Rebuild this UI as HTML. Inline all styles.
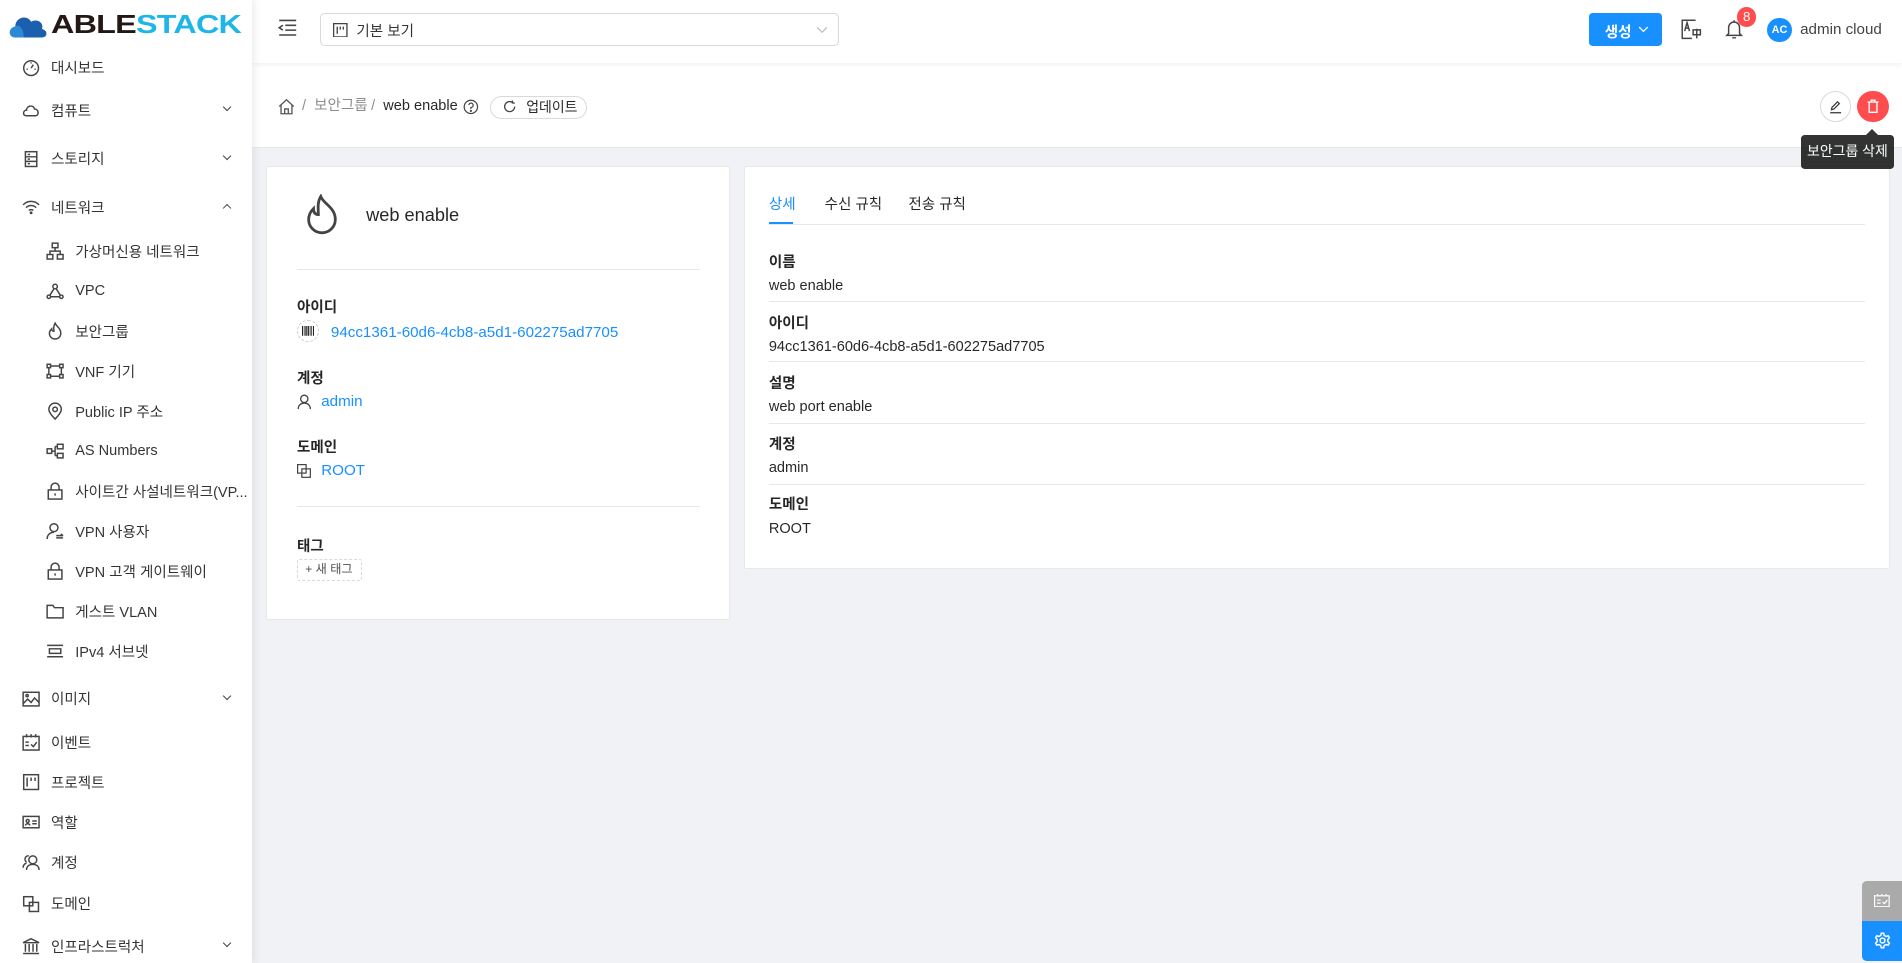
<!DOCTYPE html>
<html><head><meta charset="utf-8">
<style>
*{box-sizing:border-box;margin:0;padding:0}
html,body{width:1902px;height:963px;overflow:hidden;background:#f0f2f5}
#root{zoom:1.21301;width:1568px;height:794px;position:relative;font-family:"Liberation Sans","Noto Sans CJK KR",sans-serif;color:rgba(0,0,0,.85);font-size:12px}
.abs{position:absolute}
#side{left:0;top:0;width:208px;height:794px;background:#fff;box-shadow:2px 0 6px rgba(0,21,41,.08);z-index:2}
.mi{position:absolute;left:0;width:208px;height:20px;display:flex;align-items:center;font-size:12px;color:rgba(0,0,0,.8)}
.mi svg{position:absolute;width:15px;height:15px;fill:none;stroke:#444;stroke-width:1.3}
.mi .t{position:absolute}
.mi .ar{position:absolute;left:185px;width:5px;height:5px;border-right:1.5px solid #444;border-bottom:1.5px solid #444;transform:rotate(45deg);top:5px}
.mi .up{transform:rotate(-135deg);top:8px}
#head{left:208px;top:0;right:0;height:52px;background:#fff;box-shadow:0 1px 4px rgba(0,21,41,.08);z-index:1}
#bc{left:208px;top:52px;right:0;height:70px;background:#fff;border-bottom:1px solid #e8e8e8}
#bc span{line-height:14px}
.card{background:#fff;border:1px solid #e8e8e8;border-radius:2px}
.lab{font-weight:bold;font-size:12px;color:rgba(0,0,0,.85)}
.lnk{color:#1890ff}
.fld{position:absolute;left:20px;right:20px;font-size:12px}
.fld .l{font-weight:bold}
.fld .v{margin-top:5px}
.hr{position:absolute;height:1px;background:#e8e8e8}
</style></head><body><div id="root">

<div id="side" class="abs">
 <div class="abs" style="left:7px;top:9px;display:flex;align-items:center">
  <svg width="34" height="22" viewBox="0 0 34 22"><path d="M6 21 C0 21 0 13 6 12 C6 4 16 2 19 8 C24 5 30 9 28 14 C33 15 33 21 28 21Z" fill="#1b5fae"/><path d="M6 21 C0 21 0 13 6 12 C8 10 13 12 13 21Z" fill="#2b8ad6"/></svg>
  <div style="transform:scaleX(1.27);transform-origin:left center;margin-left:1px;white-space:nowrap"><span style="font-size:21px;font-weight:bold;letter-spacing:-0.5px;color:#231815">ABLE</span><span style="font-size:21px;font-weight:bold;letter-spacing:-0.5px;color:#1eb6e6">STACK</span></div>
 </div>
 <div class="mi" style="top:46px"><svg style="left:18px" viewBox="0 0 16 16"><circle cx="8" cy="8" r="6.5"/><path d="M8 8 L10 5 M4 9h1 M11 9h1 M8 3v1"/></svg><span class="t" style="left:42px">대시보드</span></div>
 <div class="mi" style="top:81px"><svg style="left:18px" viewBox="0 0 16 16"><path d="M4 13 C0 13 1 8 4 8 C4 4 10 3 11 7 C15 7 15 13 12 13Z"/></svg><span class="t" style="left:42px">컴퓨트</span><i class="ar"></i></div>
 <div class="mi" style="top:121px"><svg style="left:18px" viewBox="0 0 16 16"><rect x="3" y="1.5" width="10" height="13"/><path d="M3 6h10M3 10h10M5 4h2M5 8h2M5 12h2"/></svg><span class="t" style="left:42px">스토리지</span><i class="ar"></i></div>
 <div class="mi" style="top:161px"><svg style="left:18px" viewBox="0 0 16 16"><path d="M1 6 C5 2 11 2 15 6 M3.5 8.5 C6 6 10 6 12.5 8.5 M6 11 C7 10 9 10 10 11"/><circle cx="8" cy="13" r=".6" fill="#444"/></svg><span class="t" style="left:42px">네트워크</span><i class="ar up"></i></div>
 <div class="mi" style="top:197px"><svg style="left:38px" viewBox="0 0 16 16"><rect x="5.5" y="1" width="5" height="4"/><rect x="1" y="11" width="5" height="4"/><rect x="10" y="11" width="5" height="4"/><path d="M8 5v3M3.5 11V8h9v3"/></svg><span class="t" style="left:62px">가상머신용 네트워크</span></div>
 <div class="mi" style="top:230px"><svg style="left:38px" viewBox="0 0 16 16"><circle cx="8" cy="4" r="2"/><circle cx="2.5" cy="13" r="1.5"/><circle cx="13.5" cy="13" r="1.5"/><path d="M7 6 L3.5 11.5M9 6 L12.5 11.5M4 13h8"/></svg><span class="t" style="left:62px">VPC</span></div>
 <div class="mi" style="top:263px"><svg style="left:38px" viewBox="0 0 16 16"><path d="M8 1 C9 4 13 5 13 10 A5 5 0 0 1 3 10 C3 8 4 7 5 6 C5 8 6 8 7 8 C7 6 6 4 8 1Z"/></svg><span class="t" style="left:62px">보안그룹</span></div>
 <div class="mi" style="top:296px"><svg style="left:38px" viewBox="0 0 16 16"><rect x="1" y="2" width="3" height="3"/><rect x="12" y="2" width="3" height="3"/><rect x="1" y="11" width="3" height="3"/><rect x="12" y="11" width="3" height="3"/><path d="M4 3.5h8M4 12.5h8M2.5 5v6M13.5 5v6"/></svg><span class="t" style="left:62px">VNF 기기</span></div>
 <div class="mi" style="top:329px"><svg style="left:38px" viewBox="0 0 16 16"><path d="M8 15 C4 11 2.5 8.5 2.5 6.5 A5.5 5.5 0 0 1 13.5 6.5 C13.5 8.5 12 11 8 15Z"/><circle cx="8" cy="6.5" r="2"/></svg><span class="t" style="left:62px">Public IP 주소</span></div>
 <div class="mi" style="top:362px"><svg style="left:38px" viewBox="0 0 16 16"><rect x="1" y="6" width="4" height="4"/><rect x="10" y="2" width="5" height="4"/><rect x="10" y="10" width="5" height="4"/><path d="M5 8h3M8 4v8M8 4h2M8 12h2"/></svg><span class="t" style="left:62px">AS Numbers</span></div>
 <div class="mi" style="top:395px"><svg style="left:38px" viewBox="0 0 16 16"><rect x="2" y="7" width="12" height="8"/><path d="M4.5 7V4.5a3.5 3.5 0 0 1 7 0V7M8 10v2"/></svg><span class="t" style="left:62px">사이트간 사설네트워크(VP...</span></div>
 <div class="mi" style="top:428px"><svg style="left:38px" viewBox="0 0 16 16"><circle cx="7" cy="5" r="3.5"/><path d="M1 15 C1 11 4 9 7 9 M9 12h6M9 14h6M13 10.5l2 1.5"/></svg><span class="t" style="left:62px">VPN 사용자</span></div>
 <div class="mi" style="top:461px"><svg style="left:38px" viewBox="0 0 16 16"><rect x="2" y="7" width="12" height="8"/><path d="M4.5 7V4.5a3.5 3.5 0 0 1 7 0V7M8 10v2"/></svg><span class="t" style="left:62px">VPN 고객 게이트웨이</span></div>
 <div class="mi" style="top:494px"><svg style="left:38px" viewBox="0 0 16 16"><path d="M1 3h5l1.5 2H15v9H1Z"/></svg><span class="t" style="left:62px">게스트 VLAN</span></div>
 <div class="mi" style="top:527px"><svg style="left:38px" viewBox="0 0 16 16"><path d="M1 3h14M1 13h14M3 6h10v4H3Z"/></svg><span class="t" style="left:62px">IPv4 서브넷</span></div>
 <div class="mi" style="top:566px"><svg style="left:18px" viewBox="0 0 16 16"><rect x="1" y="2" width="14" height="12"/><path d="M1 12 L5 8 L8 11 L11 7 L15 11"/><circle cx="4.5" cy="5" r="1"/></svg><span class="t" style="left:42px">이미지</span><i class="ar"></i></div>
 <div class="mi" style="top:602px"><svg style="left:18px" viewBox="0 0 16 16"><rect x="1" y="3" width="14" height="12"/><path d="M4 1v3M8 1v3M12 1v3M3 8h3M3 11h3M8 10l2 2 3-4"/></svg><span class="t" style="left:42px">이벤트</span></div>
 <div class="mi" style="top:635px"><svg style="left:18px" viewBox="0 0 16 16"><rect x="1.5" y="1.5" width="13" height="13"/><path d="M4.5 4v8M8 4v3M11.5 4v3"/></svg><span class="t" style="left:42px">프로젝트</span></div>
 <div class="mi" style="top:668px"><svg style="left:18px" viewBox="0 0 16 16"><rect x="1" y="3" width="14" height="10"/><circle cx="5" cy="7" r="1.3"/><path d="M3 11 C3 9 7 9 7 11M9 7h4M9 9.5h4"/></svg><span class="t" style="left:42px">역할</span></div>
 <div class="mi" style="top:701px"><svg style="left:18px" viewBox="0 0 16 16"><circle cx="9.5" cy="6" r="3.5"/><path d="M4 15 C4 11 7 10 9.5 10 C12 10 15 11 15 15M6 2.5 A3 3 0 0 0 4 8M1 13 C1 10 3 9 4 9"/></svg><span class="t" style="left:42px">계정</span></div>
 <div class="mi" style="top:735px"><svg style="left:18px" viewBox="0 0 16 16"><rect x="1.5" y="1.5" width="8" height="8"/><rect x="6.5" y="6.5" width="8" height="8"/></svg><span class="t" style="left:42px">도메인</span></div>
 <div class="mi" style="top:770px"><svg style="left:18px" viewBox="0 0 16 16"><path d="M1 5 L8 1.5 L15 5Z M1 14.5h14M3 6v7M6.3 6v7M9.7 6v7M13 6v7"/></svg><span class="t" style="left:42px">인프라스트럭처</span><i class="ar"></i></div>
</div>

<div id="head" class="abs">
 <svg class="abs" style="left:21px;top:15px" width="16" height="16" viewBox="0 0 16 16" fill="none" stroke="#444" stroke-width="1.3"><path d="M1 2h14M6 6h9M6 10h9M1 14h14M4 6 L1 8 L4 10"/></svg>
 <div class="abs" style="left:56px;top:11px;width:428px;height:27px;border:1px solid #d9d9d9;border-radius:4px;background:#fff">
  <svg class="abs" style="left:10px;top:7px" width="12" height="12" viewBox="0 0 12 12" fill="none" stroke="#444" stroke-width="1.1"><rect x=".5" y=".5" width="11" height="11"/><path d="M3.5 3v6M6 3v2.5M8.5 3v2.5"/></svg>
  <span class="abs" style="left:29px;top:5px;font-size:12px;color:rgba(0,0,0,.8)">기본 보기</span>
  <svg class="abs" style="left:408px;top:9px" width="10" height="8" viewBox="0 0 10 8" fill="none" stroke="#bbb" stroke-width="1"><path d="M1 2 L5 6 L9 2"/></svg>
 </div>
 <div class="abs" style="left:1102px;top:11px;width:60px;height:27px;background:#1890ff;border-radius:3px;color:#fff;font-size:12px;font-weight:bold">
  <span class="abs" style="left:13px;top:6px">생성</span>
  <svg class="abs" style="left:40px;top:10px" width="9" height="7" viewBox="0 0 10 8" fill="none" stroke="#fff" stroke-width="1.2"><path d="M1 2 L5 6 L9 2"/></svg>
 </div>
 <svg class="abs" style="left:1178px;top:16px" width="17" height="17" viewBox="0 0 17 17" fill="none" stroke="#444" stroke-width="1.2"><path d="M12 1H1v15h8"/><path d="M3 10 L5 3 L7 10 M3.8 7.5h2.4M10 9h6v4h-6zM13 8v8"/></svg>
 <svg class="abs" style="left:1214px;top:16px" width="15" height="17" viewBox="0 0 15 17" fill="none" stroke="#444" stroke-width="1.2"><path d="M7.5 1v1.5M3 12V7a4.5 4.5 0 0 1 9 0v5l1.5 1.5h-12Z M6 15.5h3"/></svg>
 <div class="abs" style="left:1224px;top:6px;width:16px;height:16px;border-radius:8px;background:#ff4d4f;color:#fff;font-size:11px;text-align:center;line-height:16px">8</div>
 <div class="abs" style="left:1249px;top:15px;width:20px;height:20px;border-radius:10px;background:#1890ff;color:#fff;font-size:9px;font-weight:bold;text-align:center;line-height:20px">AC</div>
 <span class="abs" style="left:1276px;top:17px;font-size:12.5px;color:rgba(0,0,0,.75)">admin cloud</span>
</div>

<div id="bc" class="abs">
 <svg class="abs" style="left:21px;top:29px" width="14" height="14" viewBox="0 0 14 14" fill="none" stroke="#555" stroke-width="1.1"><path d="M1 7 L7 1.5 L13 7 M2.5 5.5V13h9V5.5M5.5 13V9h3v4"/></svg>
 <span class="abs" style="left:41px;top:29px;color:rgba(0,0,0,.45)">/</span>
 <span class="abs" style="left:51px;top:29px;color:rgba(0,0,0,.45)">보안그룹</span>
 <span class="abs" style="left:98px;top:29px;color:rgba(0,0,0,.45)">/</span>
 <span class="abs" style="left:108px;top:29px;color:rgba(0,0,0,.85)">web enable</span>
 <svg class="abs" style="left:174px;top:30px" width="13" height="13" viewBox="0 0 13 13" fill="none" stroke="#444" stroke-width="1"><circle cx="6.5" cy="6.5" r="5.5"/><path d="M4.8 5 A1.8 1.8 0 1 1 6.5 7v1.2"/><circle cx="6.5" cy="9.8" r=".4" fill="#444"/></svg>
 <div class="abs" style="left:196px;top:27px;width:80px;height:19px;border:1px solid #d9d9d9;border-radius:10px;background:#fff">
  <svg class="abs" style="left:10px;top:3px" width="11" height="11" viewBox="0 0 12 12" fill="none" stroke="#444" stroke-width="1.2"><path d="M10.5 6 A4.5 4.5 0 1 1 8.5 2.2 M8.5 .5v2.2h2.2"/></svg>
  <span class="abs" style="left:29px;top:2px;font-size:11.5px">업데이트</span>
 </div>
 <div class="abs" style="left:1292px;top:23px;width:26px;height:26px;border:1px solid #d9d9d9;border-radius:13px;background:#fff">
  <svg class="abs" style="left:7px;top:7px" width="11" height="11" viewBox="0 0 11 11" fill="none" stroke="#333" stroke-width="1"><path d="M2 8 L2.5 6 L7 1.5 L8.5 3 L4 7.5Z M1 10.5h9"/></svg>
 </div>
 <div class="abs" style="left:1323px;top:23px;width:26px;height:26px;border-radius:13px;background:#ff4d4f">
  <svg class="abs" style="left:8px;top:7px" width="10" height="12" viewBox="0 0 10 12" fill="none" stroke="#fff" stroke-width="1.1"><path d="M.5 2.5h9M3.5 2.5V1h3v1.5M1.8 2.5v8.5h6.4V2.5"/></svg>
 </div>
</div>
<div class="abs" style="left:1485px;top:111px;width:76px;height:28px;background:rgba(0,0,0,.8);border-radius:3px;color:#fff;font-size:11.5px;text-align:center;line-height:28px;z-index:5;white-space:nowrap">보안그룹 삭제</div>
<div class="abs" style="left:1538px;top:106px;width:0;height:0;border:5px solid transparent;border-bottom-color:rgba(0,0,0,.8);border-top:0;z-index:5"></div>

<div class="card abs" style="left:219px;top:137px;width:383px;height:374px">
 <svg class="abs" style="left:32px;top:22px" width="28" height="34" viewBox="0 0 28 34" fill="none" stroke="#444" stroke-width="2.3"><path d="M13 2 C15 8 25 11 25 21 A11 11 0 0 1 3 21 C3 17 5 14 7 12 C7 16 9 17 11 17 C11 12 10 7 13 2Z"/></svg>
 <span class="abs" style="left:82px;top:31px;font-size:15px;color:rgba(0,0,0,.85)">web enable</span>
 <div class="hr" style="left:25px;width:332px;top:84px"></div>
 <span class="abs lab" style="left:25px;top:106px">아이디</span>
 <div class="abs" style="left:25px;top:126px;width:18px;height:18px;border:1px dashed #ccc;border-radius:9px"></div>
 <svg class="abs" style="left:29px;top:131px" width="10" height="8" viewBox="0 0 10 8" stroke="#222" stroke-width="1"><path d="M.5 0v8M2.5 0v8M4 0v8M5.5 0v8M7.5 0v8M9.5 0v8"/></svg>
 <span class="abs lnk" style="left:53px;top:129px;font-size:12.5px">94cc1361-60d6-4cb8-a5d1-602275ad7705</span>
 <span class="abs lab" style="left:25px;top:165px">계정</span>
 <svg class="abs" style="left:25px;top:187px" width="12" height="13" viewBox="0 0 12 13" fill="none" stroke="#444" stroke-width="1.1"><circle cx="6" cy="4" r="3"/><path d="M1 12.5 C1 9 3.5 7.5 6 7.5 C8.5 7.5 11 9 11 12.5"/></svg>
 <span class="abs lnk" style="left:45px;top:186px;font-size:12.5px">admin</span>
 <span class="abs lab" style="left:25px;top:222px">도메인</span>
 <svg class="abs" style="left:25px;top:245px" width="12" height="12" viewBox="0 0 12 12" fill="none" stroke="#444" stroke-width="1"><rect x=".5" y=".5" width="7" height="7"/><rect x="4" y="4" width="7" height="7"/></svg>
 <span class="abs lnk" style="left:45px;top:243px;font-size:12.5px">ROOT</span>
 <div class="hr" style="left:25px;width:332px;top:279px"></div>
 <span class="abs lab" style="left:25px;top:303px">태그</span>
 <div class="abs" style="left:25px;top:323px;width:54px;height:18px;border:1px dashed #d9d9d9;border-radius:2px;font-size:10px;line-height:16px;padding-left:6px;color:rgba(0,0,0,.7)">+ 새 태그</div>
</div>

<div class="card abs" style="left:613px;top:137px;width:945px;height:332px">
 <span class="abs" style="left:20px;top:21px;color:#1890ff">상세</span>
 <span class="abs" style="left:66px;top:21px">수신 규칙</span>
 <span class="abs" style="left:135px;top:21px">전송 규칙</span>
 <div class="hr" style="left:20px;right:20px;top:47px"></div>
 <div class="abs" style="left:20px;width:20px;top:45px;height:2px;background:#1890ff"></div>
 <div class="fld" style="top:69px"><div class="l">이름</div><div class="v">web enable</div></div>
 <div class="hr" style="left:20px;right:20px;top:110px"></div>
 <div class="fld" style="top:119px"><div class="l">아이디</div><div class="v">94cc1361-60d6-4cb8-a5d1-602275ad7705</div></div>
 <div class="hr" style="left:20px;right:20px;top:160px"></div>
 <div class="fld" style="top:169px"><div class="l">설명</div><div class="v">web port enable</div></div>
 <div class="hr" style="left:20px;right:20px;top:211px"></div>
 <div class="fld" style="top:219px"><div class="l">계정</div><div class="v">admin</div></div>
 <div class="hr" style="left:20px;right:20px;top:261px"></div>
 <div class="fld" style="top:269px"><div class="l">도메인</div><div class="v">ROOT</div></div>
</div>

<div class="abs" style="left:1535px;top:726px;width:33px;height:33px;background:#aaa;border-radius:4px 0 0 0">
 <svg class="abs" style="left:10px;top:11px" width="13" height="11" viewBox="0 0 13 11" fill="none" stroke="#fff" stroke-width="1"><rect x=".5" y="1.5" width="12" height="9"/><path d="M3 0v2M6.5 0v2M10 0v2M2.5 5h3M2.5 7.5h3M7 6.5l1.5 1.5 2.5-3"/></svg>
</div>
<div class="abs" style="left:1535px;top:759px;width:33px;height:33px;background:#1890ff;border-radius:0 0 0 4px">
 <svg class="abs" style="left:10px;top:9px" width="14" height="14" viewBox="0 0 14 14" fill="none" stroke="#fff" stroke-width="1.2"><circle cx="7" cy="7" r="2"/><path d="M6 1h2l.4 1.8 1.6.9 1.7-.6 1 1.7-1.3 1.3v1.8l1.3 1.3-1 1.7-1.7-.6-1.6.9L8 13H6l-.4-1.8-1.6-.9-1.7.6-1-1.7L2.6 7.9V6.1L1.3 4.8l1-1.7 1.7.6 1.6-.9Z"/></svg>
</div>

</div></body></html>
